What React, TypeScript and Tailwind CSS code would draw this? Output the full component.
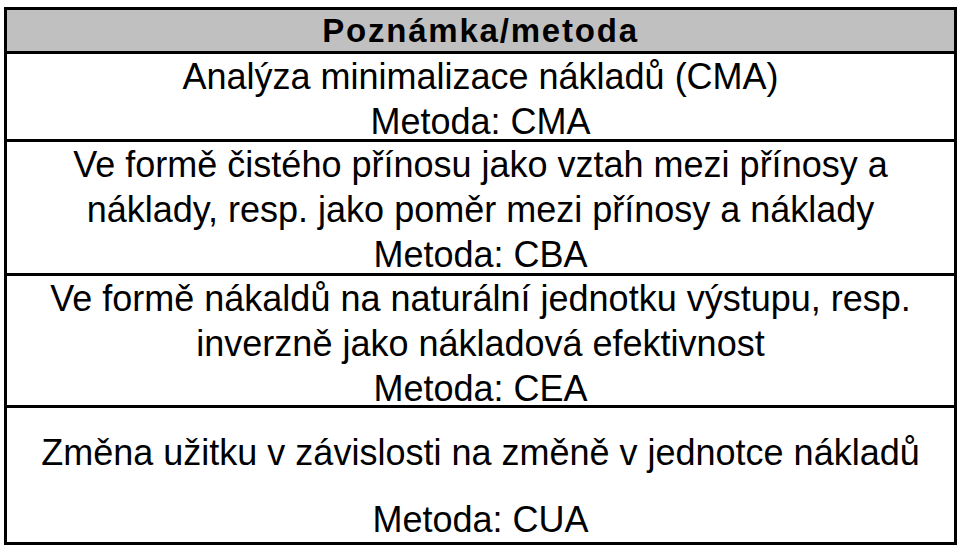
import React from "react";

const rows: { lines: string[]; className: string }[] = [
  {
    lines: ["Analýza minimalizace nákladů (CMA)", "Metoda: CMA"],
    className: "h-[88px]",
  },
  {
    lines: [
      "Ve formě čistého přínosu jako vztah mezi přínosy a",
      "náklady, resp. jako poměr mezi přínosy a náklady",
      "Metoda: CBA",
    ],
    className: "h-[134px]",
  },
  {
    lines: [
      "Ve formě nákaldů na naturální jednotku výstupu, resp.",
      "inverzně jako nákladová efektivnost",
      "Metoda: CEA",
    ],
    className: "h-[132px]",
  },
];

export default function App() {
  return (
    <div className="h-[558px] w-[960px] overflow-hidden bg-white pt-[7px] pl-[4px] font-['Liberation_Sans',Arial,sans-serif] text-black">
      <div className="w-[953px] border-[3px] border-black">
        <div className="h-[44px] border-b-[3px] border-black bg-[#c0c0c0] text-center text-[33px] leading-[41px] font-bold tracking-[1.8px]">
          Poznámka/metoda
        </div>
        {rows.map((row, i) => (
          <div
            key={i}
            className={`border-b-[3px] border-black text-center text-[36px] leading-[45px] ${row.className}`}
          >
            {row.lines.map((line) => (
              <div key={line} className="whitespace-nowrap">
                {line}
              </div>
            ))}
          </div>
        ))}
        <div className="flex h-[134px] flex-col gap-[22px] pt-[22px] text-center text-[36px] leading-[45px]">
          <div className="whitespace-nowrap">
            Změna užitku v závislosti na změně v jednotce nákladů
          </div>
          <div>Metoda: CUA</div>
        </div>
      </div>
    </div>
  );
}
